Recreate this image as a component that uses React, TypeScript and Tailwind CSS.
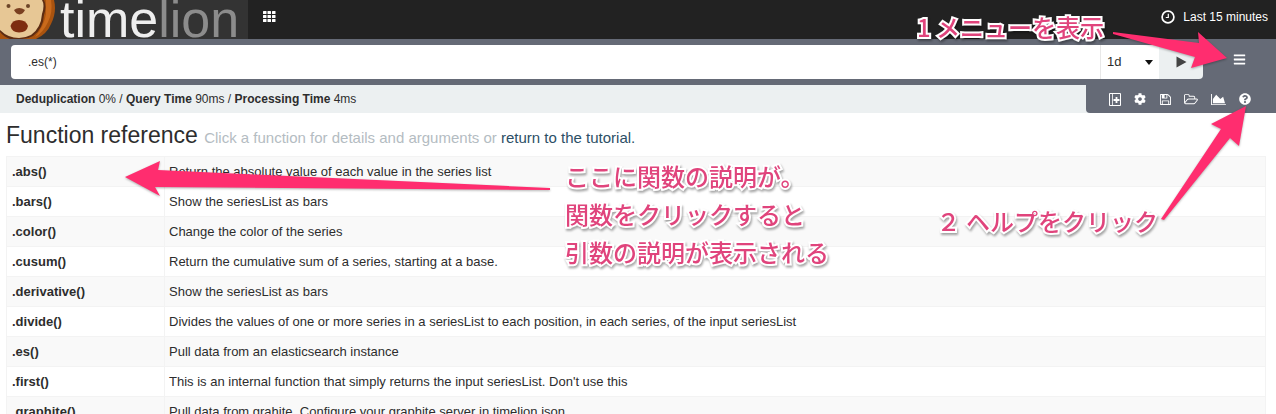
import { useState } from "react";
import type { ReactNode } from "react";
import { FaBars, FaCog, FaQuestionCircle } from "react-icons/fa";

const functions = [
  { name: ".abs()", help: "Return the absolute value of each value in the series list" },
  { name: ".bars()", help: "Show the seriesList as bars" },
  { name: ".color()", help: "Change the color of the series" },
  { name: ".cusum()", help: "Return the cumulative sum of a series, starting at a base." },
  { name: ".derivative()", help: "Show the seriesList as bars" },
  {
    name: ".divide()",
    help: "Divides the values of one or more series in a seriesList to each position, in each series, of the input seriesList",
  },
  { name: ".es()", help: "Pull data from an elasticsearch instance" },
  {
    name: ".first()",
    help: "This is an internal function that simply returns the input seriesList. Don't use this",
  },
  {
    name: ".graphite()",
    help: "Pull data from grahite. Configure your graphite server in timelion.json",
  },
];

function LionFace() {
  return (
    <svg viewBox="0 0 56 39" className="h-[39px] w-14 shrink-0" aria-hidden="true">
      <path d="M0 0H54Q57 12 51 24Q47 34 36 39H0Z" fill="#a9530f" />
      <path d="M46 0H51Q53 12 48 22Q43 33 35 37Q44 26 46 14Z" fill="#c96a1c" />
      <path d="M0 0H44Q47 6 44 15Q43 29 33 36Q28 39 22 39H0Z" fill="#5d2c12" />
      <path d="M0 0H42Q45 5 42 14Q41 28 31 35Q25 38 19 38Q8 38 0 30Z" fill="#e7c795" />
      <path d="M0 32Q4 37 10 39H0Z" fill="#a9530f" />
      <circle cx="8.500" cy="6" r="2" fill="#6d4527" />
      <circle cx="28" cy="6" r="2" fill="#6d4527" />
      <path d="M14 10Q19 6 25 10Q23 14 19.500 14.500Q16 14 14 10Z" fill="#7a3f20" />
      <path d="M10.500 26Q12 20 19 20Q26 20 28 26Q27 32.500 19 32.500Q12 32.500 10.500 26Z" fill="#7e2d10" />
    </svg>
  );
}

function GridIcon() {
  return (
    <svg viewBox="0 0 13 11" className="h-[11px] w-[13px]" fill="#fff" aria-hidden="true">
      {[0, 4, 8].map((y) =>
        [0, 4.5, 9].map((x) => <rect key={`${x}-${y}`} x={x} y={y} width="3.500" height="3" rx="0.500" />),
      )}
    </svg>
  );
}

function ClockIcon() {
  return (
    <svg viewBox="0 0 14 14" className="size-3.5" fill="none" stroke="currentColor" aria-hidden="true">
      <circle cx="7" cy="7" r="5.900" strokeWidth="1.700" />
      <path d="M7.300 3.800V7.500H4.800" strokeWidth="1.200" />
    </svg>
  );
}

function NewSheetIcon() {
  return (
    <svg viewBox="0 0 12 13" className="h-[13px] w-3" fill="none" stroke="currentColor" aria-hidden="true">
      <path d="M0.500 0.500H11.500V12.500H0.500Z" strokeWidth="1" />
      <path d="M3.500 0.500V12.500" strokeWidth="0.800" />
      <path d="M7.500 4V10M4.500 7H10.500" strokeWidth="1.800" />
    </svg>
  );
}

function SaveIcon() {
  return (
    <svg viewBox="128 128 1536 1536" className="size-[11px]" fill="currentColor" aria-hidden="true">
      <path d="M512 1536h768v-384h-768v384zm896 0h128v-896q0-14-10-38.500t-20-34.500l-281-281q-10-10-34-20t-39-10v416q0 40-28 68t-68 28h-576q-40 0-68-28t-28-68v-416h-128v1280h128v-416q0-40 28-68t68-28h832q40 0 68 28t28 68v416zm-384-928v-320q0-13-9.500-22.500t-22.500-9.500h-192q-13 0-22.500 9.500t-9.500 22.500v320q0 13 9.500 22.500t22.500 9.500h192q13 0 22.500-9.500t9.500-22.500zm640 32v928q0 40-28 68t-68 28h-1344q-40 0-68-28t-28-68v-1344q0-40 28-68t68-28h928q40 0 88 20t76 48l280 280q28 28 48 76t20 88z" />
    </svg>
  );
}

function OpenIcon() {
  return (
    <svg viewBox="0 0 1920 1792" className="h-[13px] w-3.5" fill="currentColor" aria-hidden="true">
      <path d="M1781 931q0-35-53-35h-1088q-40 0-85.500 21.500t-71.500 52.500l-294 363q-18 24-18 40 0 35 53 35h1088q40 0 86-22t71-53l294-363q18-22 18-39zm-1141-163h768v-160q0-40-28-68t-68-28h-576q-40 0-68-28t-28-68v-64q0-40-28-68t-68-28h-320q-40 0-68 28t-28 68v853l256-315q44-53 116-87.500t140-34.500zm1269 163q0 62-46 120l-295 363q-43 53-116 87.500t-140 34.500h-1088q-92 0-158-66t-66-158v-960q0-92 66-158t158-66h320q92 0 158 66t66 158v32h544q92 0 158 66t66 158v160h192q54 0 99 24.500t67 70.500q15 32 15 68z" />
    </svg>
  );
}

function ChartIcon() {
  return (
    <svg viewBox="0 0 2048 1792" className="h-[13px] w-[15px]" fill="currentColor" aria-hidden="true">
      <path d="M2048 1536v128h-2048v-1536h128v1408h1920zm-384-1024l256 896h-1664v-576l448-576 576 576z" />
    </svg>
  );
}

function IconButton({ label, children }: { label: string; children: ReactNode }) {
  return (
    <button type="button" aria-label={label} className="flex min-w-3 items-center justify-center">
      {children}
    </button>
  );
}

function Note({ className, children }: { className: string; children: ReactNode }) {
  return (
    <p
      className={`pointer-events-none absolute whitespace-nowrap font-['Noto_Sans_CJK_JP',sans-serif] text-2xl font-medium leading-[38px] text-[#e0447c] [-webkit-text-stroke:4px_white] [paint-order:stroke_fill] drop-shadow-[1px_2px_1px_rgba(0,0,0,0.35)] ${className}`}
    >
      {children}
    </p>
  );
}

export default function App() {
  const [query, setQuery] = useState(".es(*)");
  const [interval, setInterval] = useState("1d");

  return (
    <div className="relative h-screen overflow-hidden bg-white font-['Liberation_Sans',Arial,sans-serif] text-[13px] text-[#2d2d2d]">
      <header className="flex h-[39px] items-start justify-between bg-[#222] text-white">
        <div className="flex">
          <a href="#home" className="flex h-[39px] w-[248px] overflow-hidden bg-[#333]">
            <LionFace />
            <span className="ml-1 text-[52px] leading-[39px]">
              <span className="text-[#eee]">time</span>
              <span className="text-[#8c8c8c]">lion</span>
            </span>
          </a>
          <button type="button" aria-label="Applications" className="ml-[15px] mt-[11px] self-start">
            <GridIcon />
          </button>
        </div>
        <button type="button" className="mr-2 mt-2 flex h-[18px] items-center gap-2 text-xs">
          <ClockIcon />
          <span>Last 15 minutes</span>
        </button>
      </header>

      <form
        className="flex h-[46px] items-center bg-[#656a76] pl-[11px]"
        onSubmit={(event) => event.preventDefault()}
      >
        <div className="flex h-[34px] flex-1 overflow-hidden rounded">
          <input
            aria-label="Timelion expression"
            value={query}
            onChange={(event) => setQuery(event.target.value)}
            className="min-w-0 flex-1 bg-white px-[17px] text-xs outline-none"
          />
          <div className="relative w-[59px] border-l border-[#e8e8e8] bg-white">
            <select
              aria-label="Interval"
              value={interval}
              onChange={(event) => setInterval(event.target.value)}
              className="h-full w-full appearance-none bg-transparent pl-1.5 text-[13px] outline-none"
            >
              <option>1d</option>
              <option>1w</option>
              <option>1M</option>
            </select>
            <svg
              viewBox="0 0 8 5"
              className="pointer-events-none absolute right-1.5 top-[15px] h-[5px] w-2"
              aria-hidden="true"
            >
              <path d="M0 0H8L4 5Z" fill="#111" />
            </svg>
          </div>
          <button type="submit" aria-label="Run" className="flex w-11 items-center justify-center bg-[#ecf0f1]">
            <svg viewBox="0 0 11 12" className="h-3 w-[11px]" fill="#444" aria-hidden="true">
              <path d="M0.500 0.500L10.500 6L0.500 11.500Z" />
            </svg>
          </button>
        </div>
        <button type="button" aria-label="Menu" className="flex w-[73px] justify-center pb-1.5 text-white">
          <FaBars className="size-[13px]" />
        </button>
      </form>

      <div className="flex h-7 items-stretch justify-between bg-[#ecf0f1]">
        <p className="pl-4 text-xs leading-7">
          <b>Deduplication</b> 0% / <b>Query Time</b> 90ms / <b>Processing Time</b> 4ms
        </p>
        <nav
          aria-label="Sheet tools"
          className="flex w-[190px] items-center gap-[13px] rounded-bl bg-[#656a76] pl-[23px] text-white"
        >
          <IconButton label="New sheet">
            <NewSheetIcon />
          </IconButton>
          <IconButton label="Options">
            <FaCog className="size-3" />
          </IconButton>
          <IconButton label="Save">
            <SaveIcon />
          </IconButton>
          <IconButton label="Open">
            <OpenIcon />
          </IconButton>
          <IconButton label="Charts">
            <ChartIcon />
          </IconButton>
          <IconButton label="Help">
            <FaQuestionCircle className="size-3" />
          </IconButton>
        </nav>
      </div>

      <main className="pl-1.5 pr-2.5 pt-2">
        <h1 className="mb-1 text-[23px] leading-7">
          Function reference{" "}
          <small className="text-[15px] text-[#b4bcc2]">
            Click a function for details and arguments or{" "}
            <a href="#tutorial" className="text-[#2c4f66]">
              return to the tutorial.
            </a>
          </small>
        </h1>
        <table className="w-full border-collapse border border-[#f3f3f3]">
          <tbody>
            {functions.map((fn) => (
              <tr key={fn.name} className="h-[30px] border-b border-[#f3f3f3] odd:bg-[#f9f9f9]">
                <th scope="row" className="w-[158px] border-r border-[#f3f3f3] px-[5px] text-left font-bold">
                  {fn.name}
                </th>
                <td className="px-1">{fn.help}</td>
              </tr>
            ))}
          </tbody>
        </table>
      </main>

      <Note className="right-[172px] top-2">1 メニューを表示</Note>
      <Note className="right-[118px] top-[202px]">２ ヘルプをクリック</Note>
      <Note className="left-[565px] top-[157px]">
        ここに関数の説明が。
        <br />
        関数をクリックすると
        <br />
        引数の説明が表示される
      </Note>

      <svg
        viewBox="1106 24 130 50"
        className="pointer-events-none absolute right-10 top-6 h-[50px] w-[130px] drop-shadow-[0_1px_1px_rgba(0,0,0,0.3)]"
        aria-hidden="true"
      >
        <path d="M1113 32L1199 43L1198 32L1227 58L1191 68L1195 57L1113 34Z" fill="#ff2d6f" />
      </svg>
      <svg
        viewBox="1156 100 100 126"
        className="pointer-events-none absolute right-5 top-[100px] h-[126px] w-[100px] drop-shadow-[0_1px_1px_rgba(0,0,0,0.3)]"
        aria-hidden="true"
      >
        <path d="M1161 219L1221 129L1211 124L1246 106L1239 146L1230 138L1164 220Z" fill="#ff2d6f" />
      </svg>
      <svg
        viewBox="120 156 434 46"
        className="pointer-events-none absolute left-[120px] top-[156px] h-[46px] w-[434px] drop-shadow-[0_1px_1px_rgba(0,0,0,0.3)]"
        aria-hidden="true"
      >
        <path d="M125 177L160 161L158 170L550 188V190L155 187L160 196Z" fill="#ff2d6f" />
      </svg>
    </div>
  );
}
